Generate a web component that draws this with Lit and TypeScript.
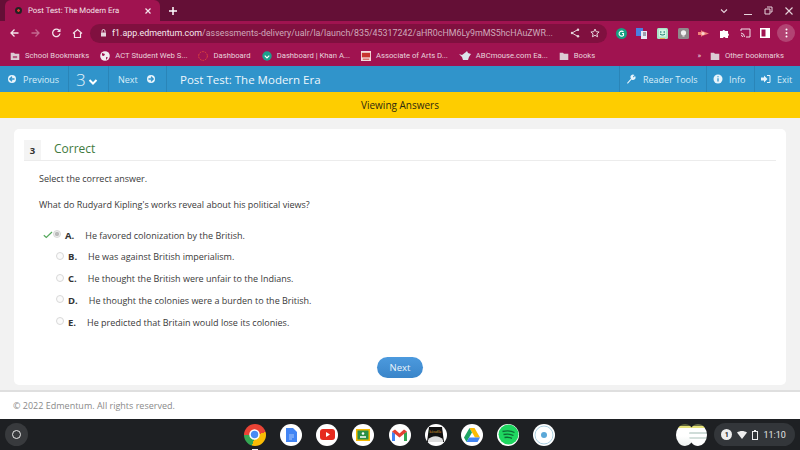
import { LitElement, html, css, svg } from "lit";
import { customElement } from "lit/decorators.js";

const folder = svg`<path d="M1 2.500h4.500L7 4h6v8.500H1z" fill="#dccbd3"/>`;
const options = [
  ["A.", "He favored colonization by the British."],
  ["B.", "He was against British imperialism."],
  ["C.", "He thought the British were unfair to the Indians."],
  ["D.", "He thought the colonies were a burden to the British."],
  ["E.", "He predicted that Britain would lose its colonies."],
];

@customElement("app-root")
export class AppRoot extends LitElement {
  static styles = css`
    :host { display: flex; flex-direction: column; width: 800px; height: 450px; overflow: hidden; font-family: "Open Sans", sans-serif; background: #fff; }
    svg { display: block; flex: none; }
    .tabs { height: 21px; background: #640f36; display: flex; padding-left: 5px; box-sizing: border-box; align-items: stretch; color: #f3e4ea; font-family: Roboto, sans-serif; }
    .tab { width: 155px; background: #a01350; border-radius: 6px 6px 0 0; display: flex; align-items: center; padding: 0 8px 0 10px; box-sizing: border-box; gap: 6px; }
    .fav { width: 7px; height: 7px; border-radius: 50%; background: radial-gradient(circle, #d33 0 25%, #222 30%); flex: none; }
    .tab-title { flex: 1; font-size: 7.800px; text-rendering: geometricPrecision; white-space: nowrap; }
    .plus { margin-left: 8px; align-self: center; }
    .win { margin-left: auto; display: flex; align-items: center; gap: 12px; padding-right: 7px; }
    .chev { margin-right: 4px; }
    .toolbar { height: 24px; background: #a01350; display: flex; align-items: center; padding-left: 9px; }
    .navbtns { display: flex; align-items: center; gap: 10px; margin-right: 7px; }
    .omni { width: 517px; height: 19px; border-radius: 10px; background: #80103f; display: flex; align-items: center; padding: 0 7px 0 10px; box-sizing: border-box; font: 8.900px Roboto, sans-serif; color: #cfa9ba; gap: 5px; white-space: nowrap; flex: none; }
    .omni b { font-weight: 400; color: #f6e9ee; }
    .url { flex: 1; overflow: hidden; }
    .omni-icons { display: flex; gap: 10px; align-items: center; }
    .exts { display: flex; align-items: center; gap: 9.700px; margin-left: 8.500px; }
    .more { width: 18px; height: 18px; border-radius: 50%; background: #b24373; display: flex; align-items: center; justify-content: center; margin-left: -3px; }
    .bookmarks { height: 21px; background: #a01350; display: flex; align-items: center; padding-left: 10px; font: 7.700px Roboto, sans-serif; color: #e9d3dd; white-space: nowrap; }
    .bm { display: flex; align-items: center; gap: 5px; margin-right: 11px; }
    .bm-end { margin-left: auto; margin-right: 16px; display: flex; align-items: center; gap: 8px; }
    .bm-other { margin: 0 0 0 1px; }
    .nav { height: 26px; background: #3094cb; display: flex; color: #d9edf8; font-size: 9px; white-space: nowrap; }
    .nav-item { display: flex; align-items: center; border-right: 1px solid #2a85b8; box-sizing: border-box; gap: 5px; padding: 0 6px; }
    .prev { width: 69px; }
    .num { width: 40px; font-size: 17px; font-weight: 300; color: #e8f4fb; padding-left: 7px; gap: 2px; }
    .num svg { margin-top: 6px; }
    .nxt { width: 58px; padding-left: 9px; gap: 7px; }
    .title { flex: 1; padding-left: 13px; font-size: 11.500px; color: #eef7fc; display: flex; align-items: center; }
    .nav-r { border-right: 0; border-left: 1px solid #2a85b8; gap: 7px; }
    .tools { width: 87px; }
    .info { width: 48px; gap: 6px; }
    .exit { width: 46px; gap: 6px; }
    .banner { height: 26px; background: #fecd00; display: flex; align-items: center; justify-content: center; font-size: 10px; color: #2f2a10; }
    .main { flex: 1; min-height: 0; background: #f2f2f2; border-bottom: 2px solid #dfdfdf; padding: 11px 14px 5px; }
    .card { height: 100%; box-sizing: border-box; background: #fff; border-radius: 5px; padding: 11px 10px 0; display: flex; flex-direction: column; }
    .head { display: flex; align-items: stretch; height: 20px; border-bottom: 1px solid #ececec; }
    .badge { width: 17px; background: #f4f4f4; font-size: 9.500px; font-weight: 700; color: #333; display: flex; align-items: center; justify-content: center; }
    .correct { margin-left: 13px; color: #3f7a40; font-size: 12px; font-weight: 500; line-height: 18px; }
    .p { margin: 11px 0 0 15px; font-size: 9px; line-height: 13px; color: #3a3a3a; }
    .p + .p { margin-top: 13px; }
    .list { margin-top: 17.500px; display: flex; flex-direction: column; gap: 8.750px; font-size: 9px; color: #3a3a3a; }
    .opt { display: flex; align-items: center; height: 13px; padding-left: 32px; white-space: nowrap; }
    .opt.first { padding-left: 19px; }
    .radio { width: 8px; height: 8px; box-sizing: border-box; border-radius: 50%; border: 1px solid #d8d8d8; background: #fbfbfb; margin-right: 4px; margin-top: -2px; }
    .first .radio { background: radial-gradient(circle, #bbb 0 45%, #eee 55%); }
    .letter { font-weight: 700; font-size: 9.500px; color: #333; margin-right: 11px; }
    .btn-row { margin-top: 28px; display: flex; justify-content: center; }
    .btn { width: 46px; height: 21px; border-radius: 11px; background: linear-gradient(#4c9ade, #3a85c9); color: #eaf4fb; font-size: 9.500px; display: flex; align-items: center; justify-content: center; }
    .foot { height: 27px; box-sizing: border-box; padding: 0 13px; display: flex; align-items: center; font-size: 9px; color: #8a8a8a; background: #fff; }
    .shelf { height: 31px; background: #1e2023; display: flex; align-items: center; padding: 0 5px; }
    .launcher { width: 23px; height: 23px; border-radius: 50%; background: #383a3d; display: flex; align-items: center; justify-content: center; }
    .launcher span { width: 7px; height: 7px; border: 1px solid #e8e8e8; border-radius: 50%; }
    .apps { display: flex; gap: 14.200px; margin-left: 216px; }
    .app { width: 22px; height: 22px; border-radius: 50%; background: #fff; display: flex; align-items: center; justify-content: center; position: relative; }
    .chrome { background: conic-gradient(from -90deg, #ea4335 0 165deg, #fbbc04 165deg 285deg, #34a853 285deg); }
    .chrome::after { content: ""; position: absolute; left: 8px; bottom: -4px; width: 6px; height: 1px; background: #eee; }
    .kindle { background: #fff; }
    .thumb { margin-left: 121px; display: flex; }
    .thumb span { width: 18px; height: 22px; border-radius: 50%; background: linear-gradient(#5a5f3a 0 2px, #e6e27a 2px 4px, #fff 4px 55%, #eef2f0); }
    .thumb span + span { margin-left: -5px; background: linear-gradient(#6a6f4a 0 2px, #e6e27a 2px 4px, #fff 4px 8px, #cfdcd8 8px 10px, #fff 10px 13px, #d5e0dc 13px 15px, #fff 15px); }
    .tray { margin-left: 7px; width: 81px; height: 23px; border-radius: 12px; background: #33363a; display: flex; align-items: center; gap: 5px; padding-left: 7px; box-sizing: border-box; color: #e5e5e5; font: 9px Roboto, sans-serif; }
    .one { width: 11px; height: 11px; border-radius: 50%; background: #eee; color: #222; font-size: 7px; font-weight: 700; display: flex; align-items: center; justify-content: center; }
  `;

  private circleArrow(dir: number) {
    const d = dir < 0 ? "M8.500 6H4M6 3.800 3.800 6 6 8.200" : "M3.500 6H8M6 3.800 8.200 6 6 8.200";
    return html`<svg width="12" height="12" viewBox="0 0 12 12"><circle cx="6" cy="6" r="4" fill="#e8f4fb"/><path d="${d}" fill="none" stroke="#3094cb" stroke-width="1.300"/></svg>`;
  }

  render() {
    return html`
      <div class="tabs">
        <div class="tab"><span class="fav"></span><span class="tab-title">Post Test: The Modern Era</span>
          <svg width="8" height="8" viewBox="0 0 8 8"><path d="M1.500 1.500l5 5m0-5l-5 5" stroke="#f3e4ea" stroke-width="1.200"/></svg></div>
        <svg class="plus" width="10" height="10" viewBox="0 0 10 10"><path d="M5 1v8M1 5h8" stroke="#fff" stroke-width="1.500"/></svg>
        <div class="win">
          <svg class="chev" width="8" height="8" viewBox="0 0 8 8"><path d="M1 2.500l3 3 3-3" fill="none" stroke="#e6d5dc" stroke-width="1.100"/></svg>
          <svg width="8" height="8" viewBox="0 0 8 8"><path d="M0 7.500h8" stroke="#e6d5dc"/></svg>
          <svg width="9" height="9" viewBox="0 0 9 9"><path d="M3 1h5v5H6.500M1 3h5v5H1z" fill="none" stroke="#e6d5dc"/></svg>
          <svg width="8" height="8" viewBox="0 0 8 8"><path d="M.5.500l7 7m0-7l-7 7" stroke="#e6d5dc" stroke-width="1.100"/></svg>
        </div>
      </div>
      <div class="toolbar">
        <div class="navbtns">
          <svg width="11" height="10" viewBox="0 0 10 10"><path d="M9 5H1.500M5 1.500 1.500 5 5 8.500" fill="none" stroke="#f3e4ea" stroke-width="1.300"/></svg>
          <svg width="11" height="10" viewBox="0 0 10 10"><path d="M1 5h7.500M5 1.500 8.500 5 5 8.500" fill="none" stroke="#c46a90" stroke-width="1.300"/></svg>
          <svg width="11" height="10" viewBox="0 0 10 10"><path d="M8.500 5.500A3.700 3.700 0 1 1 7.500 2.300" fill="none" stroke="#f3e4ea" stroke-width="1.300"/><path d="M9 .500V4H5.500z" fill="#f3e4ea"/></svg>
          <svg width="11" height="11" viewBox="0 0 11 11"><path d="M1 5.500 5.500 1.500 10 5.500M2.500 5v4.500h6V5" fill="none" stroke="#f3e4ea" stroke-width="1.200"/></svg>
        </div>
        <div class="omni">
          <svg width="7" height="8" viewBox="0 0 7 8"><path d="M1 3.500h5V7.500H1z" fill="#e6d5dc"/><path d="M2 3.500V2a1.500 1.500 0 0 1 3 0v1.500" fill="none" stroke="#e6d5dc"/></svg>
          <span class="url"><b>f1.app.edmentum.com</b>/assessments-delivery/ualr/la/launch/835/45317242/aHR0cHM6Ly9mMS5hcHAuZWR...</span>
          <span class="omni-icons">
            <svg width="10" height="10" viewBox="0 0 10 10"><path d="M8 1.500 2 5l6 3.500" fill="none" stroke="#e6d5dc"/><circle cx="8" cy="1.700" r="1.200" fill="#e6d5dc"/><circle cx="2" cy="5" r="1.200" fill="#e6d5dc"/><circle cx="8" cy="8.300" r="1.200" fill="#e6d5dc"/></svg>
            <svg width="10" height="10" viewBox="0 0 10 10"><path d="M5 1l1.200 2.700 2.900.3-2.200 1.900.7 2.900L5 7.300 2.400 8.800l.7-2.900L.9 4l2.900-.3z" fill="none" stroke="#e6d5dc"/></svg>
          </span>
        </div>
        <div class="exts">
          <svg width="11" height="11" viewBox="0 0 11 11"><circle cx="5.500" cy="5.500" r="5.500" fill="#15a082"/><path d="M7.500 4a2.500 2.500 0 1 0 0 3.300V5.500H6" fill="none" stroke="#fff" stroke-width="1.100"/></svg>
          <svg width="11" height="11" viewBox="0 0 11 11"><path d="M0 0h7v8H0z" fill="#4a7fe0"/><path d="M5 3h6v8H5z" fill="#e8eaf6"/><path d="M7 5h3M7 7h3" stroke="#556"/></svg>
          <svg width="11" height="11" viewBox="0 0 11 11"><rect width="11" height="11" rx="1.500" fill="#a8e6c8"/><rect x="2" y="1.500" width="7" height="7" fill="#d5f5e6"/><circle cx="3.800" cy="4" r=".8" fill="#176"/><circle cx="7.200" cy="4" r=".8" fill="#176"/><path d="M3 6c1.500 1.300 3.500 1.300 5 0" fill="none" stroke="#176"/><path d="M3 10.500h5" stroke="#e6b34a"/></svg>
          <svg width="11" height="11" viewBox="0 0 11 11"><rect width="11" height="11" rx="1.500" fill="#8f8a8c"/><circle cx="5.500" cy="4.800" r="2.600" fill="#f1f1f1"/><path d="M4.500 8h2" stroke="#f1f1f1"/></svg>
          <svg width="11" height="11" viewBox="0 0 11 11"><path d="M0 4h3V2l1 1 7 2.500L4 8 3 9V7H0z" fill="#f0827a"/><circle cx="5" cy="5.500" r="1.600" fill="#fbd5d0"/></svg>
          <svg width="11" height="11" viewBox="0 0 11 11"><path d="M1 3h2.500a1.300 1.300 0 0 1 2.500 0h3v2.500a1.300 1.300 0 0 1 0 2.500v2H6.500a1.300 1.300 0 0 0-2.500 0H1z" fill="#fff"/></svg>
          <svg width="11" height="10" viewBox="0 0 11 10"><path d="M1 3V1h9v8H6M1 5a4 4 0 0 1 3.500 4M1 7a2 2 0 0 1 1.500 2" fill="none" stroke="#f0e2e8"/></svg>
          <svg width="10" height="10" viewBox="0 0 10 10"><path d="M0 0h10v10H0z" fill="#fff"/><path d="M1.500 1.500h4v7h-4z" fill="#a01350"/></svg>
          <div class="more"><svg width="3" height="10" viewBox="0 0 3 10"><circle cx="1.500" cy="1.500" r="1" fill="#fff"/><circle cx="1.500" cy="5" r="1" fill="#fff"/><circle cx="1.500" cy="8.500" r="1" fill="#fff"/></svg></div>
        </div>
      </div>
      <div class="bookmarks">
        <span class="bm"><svg width="10" height="10" viewBox="0 0 14 14">${folder}<path d="M4 7h6v3H4z" fill="#a01350" opacity=".6"/></svg>School Bookmarks</span>
        <span class="bm"><svg width="10" height="10" viewBox="0 0 10 10"><circle cx="5" cy="5" r="4.800" fill="#f2eef0"/><path d="M2 2l3 1-1 2-2-.5zM6 6l2 .5L6 9z" fill="#a01350"/></svg>ACT Student Web S...</span>
        <span class="bm"><svg width="10" height="10" viewBox="0 0 11 11"><circle cx="5.500" cy="5.500" r="4.800" fill="none" stroke="#e34c3c" stroke-dasharray="2 1"/></svg>Dashboard</span>
        <span class="bm"><svg width="10" height="10" viewBox="0 0 11 11"><circle cx="5.500" cy="5.500" r="5.200" fill="#1c9f8c"/><path d="M3 5l2.500 2.500L8 5" fill="none" stroke="#fff" stroke-width="1.300"/></svg>Dashboard | Khan A...</span>
        <span class="bm"><svg width="10" height="10" viewBox="0 0 11 11"><rect width="11" height="11" fill="#f4dcdc"/><path d="M1 2h9v5H1z" fill="#c9352f"/><path d="M2 9h7" stroke="#c9352f"/></svg>Associate of Arts D...</span>
        <span class="bm"><svg width="12" height="9" viewBox="0 0 12 9"><path d="M0 3l3 1 4-3 1-1 1 2 3 1-2 3-1 3H4L3 6z" fill="#dce3ea"/></svg>ABCmouse.com Ea...</span>
        <span class="bm"><svg width="10" height="10" viewBox="0 0 14 14">${folder}</svg>Books</span>
        <span class="bm-end">»<span class="bm bm-other"><svg width="10" height="10" viewBox="0 0 14 14">${folder}</svg>Other bookmarks</span></span>
      </div>
      <div class="nav">
        <div class="nav-item prev">${this.circleArrow(-1)}Previous</div>
        <div class="nav-item num">3<svg width="10" height="8" viewBox="0 0 10 8"><path d="M1.500 2 5 5.500 8.500 2" fill="none" stroke="#fff" stroke-width="2"/></svg></div>
        <div class="nav-item nxt">Next${this.circleArrow(1)}</div>
        <div class="title">Post Test: The Modern Era</div>
        <div class="nav-item nav-r tools"><svg width="10" height="10" viewBox="0 0 10 10"><path d="M1 9l4-4.500A2.500 2.500 0 0 1 8.500 1L7 2.500 7.500 3.500 9 2a2.500 2.500 0 0 1-3.500 3.500L1.800 9.800z" fill="#e8f4fb"/></svg>Reader Tools</div>
        <div class="nav-item nav-r info"><svg width="10" height="10" viewBox="0 0 10 10"><circle cx="5" cy="5" r="4.500" fill="#e8f4fb"/><path d="M5 4.200v3.300M5 2.200v1" stroke="#3094cb" stroke-width="1.300"/></svg>Info</div>
        <div class="nav-item nav-r exit"><svg width="10" height="10" viewBox="0 0 10 10"><path d="M0 3.500h3V1.500L6.500 5 3 8.500v-2H0z" fill="#e8f4fb"/><path d="M6 1.500h3v7H6" fill="none" stroke="#e8f4fb"/></svg>Exit</div>
      </div>
      <div class="banner">Viewing Answers</div>
      <div class="main">
        <div class="card">
          <div class="head"><span class="badge">3</span><span class="correct">Correct</span></div>
          <p class="p">Select the correct answer.</p>
          <p class="p">What do Rudyard Kipling's works reveal about his political views?</p>
          <div class="list">
            ${options.map(([l, t], i) => html`
              <div class="opt ${i === 0 ? "first" : ""}">
                ${i === 0 ? html`<svg width="10" height="8" viewBox="0 0 10 8"><path d="M.8 4.200 3.300 6.500 9 1" fill="none" stroke="#55a85c" stroke-width="1.200"/></svg>` : ""}
                <span class="radio"></span><span class="letter">${l}</span><span>${t}</span>
              </div>`)}
          </div>
          <div class="btn-row"><div class="btn">Next</div></div>
        </div>
      </div>
      <div class="foot">© 2022 Edmentum. All rights reserved.</div>
      <div class="shelf">
        <div class="launcher"><span></span></div>
        <div class="apps">
          <div class="app chrome"><svg width="11" height="11" viewBox="0 0 11 11"><circle cx="5.500" cy="5.500" r="4.500" fill="#4a8af4" stroke="#fff" stroke-width="1.500"/></svg></div>
          <div class="app"><svg width="11" height="14" viewBox="0 0 11 14"><path d="M0 0h7l4 4v10H0z" fill="#4285f4"/><path d="M3 7h5M3 9h5M3 11h3" stroke="#a9c8fa"/></svg></div>
          <div class="app"><svg width="15" height="11" viewBox="0 0 15 11"><rect width="15" height="11" rx="3" fill="#e62a1e"/><path d="M6 3l4 2.500-4 2.500z" fill="#fff"/></svg></div>
          <div class="app"><svg width="14" height="12" viewBox="0 0 14 12"><rect width="14" height="12" fill="#f5b800"/><rect x="1.500" y="1.500" width="11" height="9" fill="#2b8f46"/><circle cx="7" cy="4.500" r="1.300" fill="#fff"/><path d="M4 8h6" stroke="#fff" stroke-width="1.500"/></svg></div>
          <div class="app"><svg width="15" height="12" viewBox="0 0 15 12"><path d="M0 3v9h3V4z" fill="#4285f4"/><path d="M15 3v9h-3V4z" fill="#34a853"/><path d="M0 2.500 3 .5 7.500 4.500 12 .5l3 2L7.500 8.500z" fill="#e34133"/></svg></div>
          <div class="app kindle"><svg width="17" height="15" viewBox="0 0 17 15"><path d="M2 0h13l2 15H0z" fill="#111"/><path d="M1 13c3-5 12-5 15 0v2H1z" fill="#ddd"/><text x="8.500" y="5.500" text-anchor="middle" font-family="Liberation Serif, serif" font-size="5" fill="#c8912e">kindle</text></svg></div>
          <div class="app"><svg width="16" height="14" viewBox="0 0 16 14"><path d="M5.500 0h5L16 9.500h-5z" fill="#fbbc04"/><path d="M5.500 0 0 9.500 2.500 14 8 4.500z" fill="#1fa463"/><path d="M2.500 14h11L16 9.500H5z" fill="#4285f4"/></svg></div>
          <div class="app"><svg width="21" height="21" viewBox="0 0 21 21"><circle cx="10.500" cy="10.500" r="10" fill="#1ed760"/><path d="M4.500 7.500c4-1 8.500-.8 12 1M5.500 10.500c3.200-.7 7-.5 10 1M6.500 13.500c2.500-.5 5-.3 7.500.8" fill="none" stroke="#0d6b33" stroke-width="1.300"/></svg></div>
          <div class="app"><svg width="20" height="20" viewBox="0 0 20 20"><circle cx="10" cy="10" r="9" fill="#fff" stroke="#a9cfe0"/><circle cx="10" cy="10" r="3" fill="#5ba8d8"/></svg></div>
        </div>
        <div class="thumb"><span></span><span></span></div>
        <div class="tray">
          <span class="one">1</span>
          <svg width="10" height="8" viewBox="0 0 10 8"><path d="M0 1.500C3-.5 7-.5 10 1.500L5 8z" fill="#eee"/></svg>
          <svg width="6" height="10" viewBox="0 0 6 10"><rect x=".5" y="1.500" width="5" height="8" fill="none" stroke="#eee"/><path d="M2 .5h2" stroke="#eee"/></svg>
          <span>11:10</span>
        </div>
      </div>
    `;
  }
}
